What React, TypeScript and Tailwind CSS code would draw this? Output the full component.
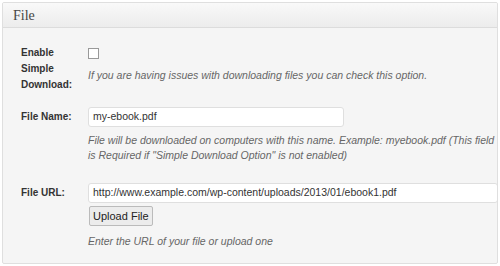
import React from "react";

export default function App() {
  return (
    <div className="w-[500px] h-[266px] bg-white pt-[2px] pl-[2px]" style={{ fontFamily: '"Liberation Sans", Arial, sans-serif' }}>
      <div className="w-[496px] h-[262px] border border-[#dfdfdf] bg-[#f5f5f5] rounded-[2px] overflow-hidden flex flex-col">
        <div className="h-[25px] shrink-0 border-b border-[#dcdcdc] bg-gradient-to-b from-[#f9f9f9] to-[#ececec] flex items-center pl-[10px]">
          <span className="text-[14px] text-[#464646]" style={{ fontFamily: '"Liberation Serif", "DejaVu Serif", serif' }}>File</span>
        </div>
        <div className="flex flex-col pl-[18px] pt-[17px] text-[10.5px]">
          <div className="flex">
            <div className="w-[67px] shrink-0 font-bold text-[10px] text-[#333] leading-[16px]">Enable<br />Simple<br />Download:</div>
            <div className="flex flex-col pt-[1px]">
              <div className="w-[11px] h-[11px] border border-[#999] bg-white mt-[2px]" />
              <div className="italic text-[#666] mt-[8px] leading-[16px]">If you are having issues with downloading files you can check this option.</div>
            </div>
          </div>
          <div className="flex mt-[14px]">
            <div className="w-[67px] shrink-0 font-bold text-[10px] text-[#333] leading-[20px]">File Name:</div>
            <div className="flex flex-col">
              <div className="w-[256px] h-[20px] border border-[#dfdfdf] bg-white rounded-[3px] flex items-center pl-[4px] text-[#333]">my-ebook.pdf</div>
              <div className="italic text-[#666] leading-[15px] mt-[6px] w-[412px]">File will be downloaded on computers with this name. Example: myebook.pdf (This field is Required if "Simple Download Option" is not enabled)</div>
            </div>
          </div>
          <div className="flex mt-[20px]">
            <div className="w-[67px] shrink-0 font-bold text-[10px] text-[#333] leading-[20px]">File URL:</div>
            <div className="flex flex-col">
              <div className="w-[410px] h-[20px] border border-[#dfdfdf] bg-white rounded-[3px] flex items-center pl-[4px] text-[#333]">http://www.example.com/wp-content/uploads/2013/01/ebook1.pdf</div>
              <div className="self-start mt-[3px] ml-[1px] h-[20px] px-[3px] border border-[#bbb] bg-[#ececec] rounded-[2px] flex items-center justify-center text-[#222] text-[11px]">Upload File</div>
              <div className="italic text-[#666] mt-[7px] leading-[16px]">Enter the URL of your file or upload one</div>
            </div>
          </div>
        </div>
      </div>
    </div>
  );
}
